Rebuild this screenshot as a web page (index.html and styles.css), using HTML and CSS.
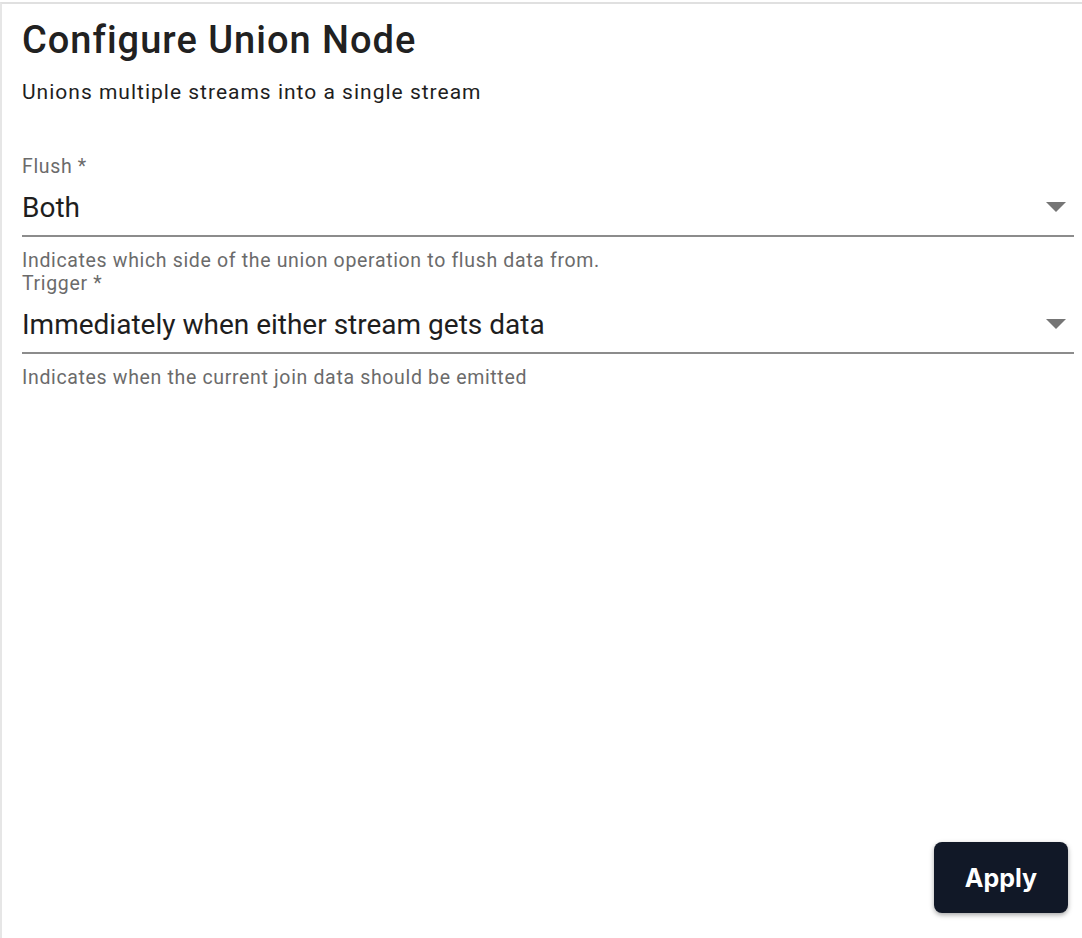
FILE: index.html
```html
<!DOCTYPE html>
<html lang="en">
<head>
<meta charset="utf-8">
<title>Configure Union Node</title>
<link rel="stylesheet" href="styles.css">
</head>
<body>
<div class="panel">
  <h1 class="title">Configure Union Node</h1>
  <p class="subtitle">Unions multiple streams into a single stream</p>
  <div class="field field-first">
    <label class="label">Flush *</label>
    <div class="select">
      <span class="value">Both</span>
      <svg class="arrow" width="20" height="10" viewBox="0 0 20 10"><path d="M0 0h20L10 10z" fill="#757575"/></svg>
    </div>
    <div class="helper">Indicates which side of the union operation to flush data from.</div>
  </div>
  <div class="field">
    <label class="label">Trigger *</label>
    <div class="select">
      <span class="value">Immediately when either stream gets data</span>
      <svg class="arrow" width="20" height="10" viewBox="0 0 20 10"><path d="M0 0h20L10 10z" fill="#757575"/></svg>
    </div>
    <div class="helper">Indicates when the current join data should be emitted</div>
  </div>
  <div class="actions">
    <button class="apply">Apply</button>
  </div>
</div>
</body>
</html>
```

FILE: styles.css
```css
html, body {
  margin: 0;
  padding: 0;
  background: #ffffff;
}
body {
  font-family: Roboto, "Liberation Sans", sans-serif;
  padding-top: 2px;
}
.panel {
  box-sizing: border-box;
  min-height: 936px;
  border-top: 2px solid #e0e0e0;
  border-left: 2px solid #e6e6e6;
  padding: 14px 8px 25px 20px;
  display: flex;
  flex-direction: column;
}
.title {
  margin: 0;
  font-size: 38px;
  line-height: 44px;
  font-weight: 500;
  letter-spacing: 1px;
  color: #212121;
}
.subtitle {
  margin: 16px 0 0;
  font-size: 21px;
  line-height: 28px;
  letter-spacing: 1px;
  color: #1e1e1e;
}
.field {
  display: flex;
  flex-direction: column;
}
.field-first {
  margin-top: 49px;
}
.label {
  font-size: 19.5px;
  line-height: 23px;
  letter-spacing: 0.66px;
  color: #6b6b6b;
}
.select {
  height: 57px;
  display: flex;
  align-items: center;
  justify-content: space-between;
  border-bottom: 2px solid #8c8c8c;
}
.value {
  font-size: 28px;
  color: #1e1e1e;
  padding-top: 2px;
}
.arrow {
  margin-right: 8px;
}
.helper {
  margin-top: 12px;
  font-size: 19.5px;
  line-height: 23px;
  letter-spacing: 0.66px;
  color: #6b6b6b;
}
.actions {
  margin-top: auto;
  display: flex;
  justify-content: flex-end;
  padding-right: 6px;
}
.apply {
  width: 134px;
  height: 71px;
  border: none;
  border-radius: 8px;
  background: #111827;
  color: #ffffff;
  font-family: Inter, "Liberation Sans", sans-serif;
  font-weight: 700;
  font-size: 25px;
  box-shadow: 0 2px 5px rgba(0, 0, 0, 0.35);
  cursor: pointer;
}
```
